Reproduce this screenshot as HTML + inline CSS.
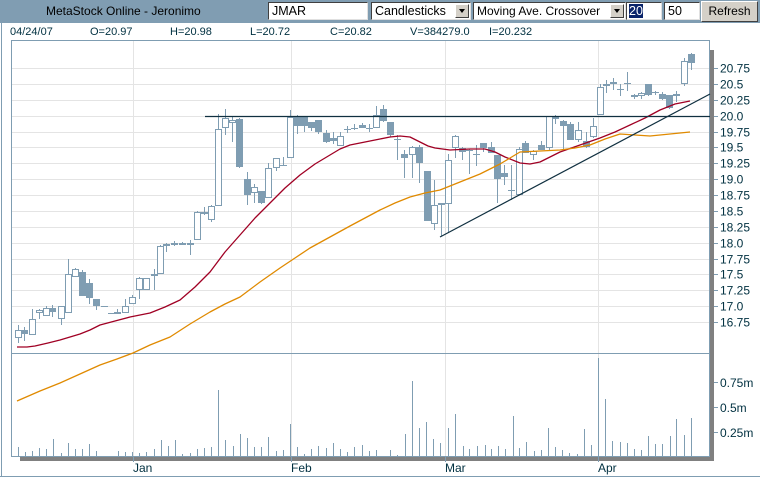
<!DOCTYPE html>
<html><head><meta charset="utf-8">
<style>
body{margin:0;width:760px;height:478px;background:#fff;overflow:hidden;font-family:"Liberation Sans",sans-serif;position:relative}
.hdr{position:absolute;left:0;top:0;width:760px;height:23px;background:#809db2}
.ttl{position:absolute;left:46px;top:4px;font-size:12px;color:#000}
.inp{position:absolute;top:2px;height:18px;background:#fff;border:1px solid #404040;border-right-color:#e0e0e0;border-bottom-color:#e0e0e0;box-sizing:border-box;font-size:12.5px;padding-left:3px;line-height:16px;overflow:hidden;white-space:nowrap}
.arr{position:absolute;right:1px;top:1px;width:14px;height:14px;background:#d4d0c8;border:1px solid;border-color:#fff #404040 #404040 #fff;box-sizing:border-box}
.arr:after{content:"";position:absolute;left:3px;top:4px;border-left:3.5px solid transparent;border-right:3.5px solid transparent;border-top:4px solid #000}
.btn{position:absolute;left:701px;top:1px;width:57px;height:21px;background:#d4d0c8;border:1px solid;border-color:#fff #404040 #404040 #fff;box-sizing:border-box;font-size:12px;text-align:center;line-height:18px}
.info{position:absolute;top:26px;font-size:11px;color:#003040;font-family:"Liberation Sans Narrow","Liberation Sans",sans-serif}
svg{position:absolute;left:0;top:0}
</style></head><body>
<div class="hdr"></div>
<div class="ttl">MetaStock Online - Jeronimo</div>
<div class="inp" style="left:268px;width:100px">JMAR</div>
<div class="inp" style="left:371px;width:100px">Candlesticks<div class="arr"></div></div>
<div class="inp" style="left:473px;width:153px;font-size:12px">Moving Ave. Crossover<div class="arr"></div></div>
<div class="inp" style="left:626px;width:36px;padding-left:2px"><span style="background:#0a246a;color:#fff">20</span></div>
<div class="inp" style="left:664px;width:36px">50</div>
<div class="btn">Refresh</div>
<div class="info" style="left:10px">04/24/07</div>
<div class="info" style="left:90px">O=20.97</div>
<div class="info" style="left:170px">H=20.98</div>
<div class="info" style="left:250px">L=20.72</div>
<div class="info" style="left:330px">C=20.82</div>
<div class="info" style="left:410px">V=384279.0</div>
<div class="info" style="left:489px">I=20.232</div>
<svg id="s" width="760" height="478" xmlns="http://www.w3.org/2000/svg"></svg>
<script>
var s='';
function L(x1,y1,x2,y2,c,w){s+='<line x1="'+x1+'" y1="'+y1+'" x2="'+x2+'" y2="'+y2+'" stroke="'+c+'" stroke-width="'+(w||1)+'"/>';}
L(1.5,23,1.5,477,'#7f9db2');L(0,476.5,760,476.5,'#7f9db2');
for(var i=0;i<17;i++){var y=Math.round(68+i*15.875)+.5;L(12,y,710,y,'#e4e4e4');}
[133,291,445,598].forEach(function(x){L(x+.5,41,x+.5,457,'#e4e4e4');});
L(11.5,40,11.5,457,'#7f9db2');L(11,40.5,710,40.5,'#7f9db2');L(709.5,40,709.5,457,'#7f9db2');L(11,353.5,710,353.5,'#7f9db2');L(11,456.5,710,456.5,'#7f9db2');
s+='<rect x="710" y="50" width="4" height="411" fill="#808080"/><rect x="20" y="457" width="694" height="4" fill="#808080"/>';
var lab=['20.75','20.5','20.25','20.0','19.75','19.5','19.25','19.0','18.75','18.5','18.25','18.0','17.75','17.5','17.25','17.0','16.75'];
lab.forEach(function(t,i){var y=Math.round(68+i*15.875)+.5;L(714,y,718,y,'#7f9db2');s+='<text x="720" y="'+(y+4)+'" font-size="12" fill="#003040" font-family="Liberation Sans">'+t+'</text>';});
[['0.75m',382],['0.5m',407],['0.25m',432]].forEach(function(a){L(714,a[1]+.5,718,a[1]+.5,'#7f9db2');s+='<text x="720" y="'+(a[1]+5)+'" font-size="12" fill="#003040" font-family="Liberation Sans">'+a[0]+'</text>';});
[['Jan',133],['Feb',291],['Mar',445],['Apr',598]].forEach(function(a){L(a[1]+.5,457,a[1]+.5,462,'#7f9db2');s+='<text x="'+(a[1])+'" y="472" font-size="12" fill="#003040" font-family="Liberation Sans">'+a[0]+'</text>';});
var C=[[18,330,338,0,325,343],[24,330,334,1,327,341],[32,319,335,0,309,335],[39,310,313,0,309,319],[46,308,316,0,306,316],[52,308,312,1,305,317],[61,306,319,0,306,325],[68,274,313,0,259,313],[75,269,277,0,268,277],[82,272,296,1,270,296],[89,283,298,1,279,304],[96,299,306,1,299,310],[104,306,307,1,306,307],[111,313,314,1,313,314],[117,312,313,0,309,314],[125,306,313,0,299,313],[132,297,304,0,295,304],[139,278,290,0,277,299],[146,278,290,0,278,290],[154,274,276,1,269,290],[160,246,274,0,245,274],[166,244,246,0,243,252],[174,243,244,0,241,246],[182,243,244,0,242,244],[190,243,244,0,240,255],[197,212,240,0,211,240],[204,212,214,1,207,215],[211,206,220,0,205,222],[218,129,206,0,114,206],[225,118,128,0,109,135],[232,120,123,0,116,142],[239,119,167,1,118,168],[247,179,195,1,172,205],[254,187,193,0,184,203],[261,191,203,1,191,204],[268,168,198,0,163,198],[276,158,168,0,158,171],[283,165,166,1,157,166],[290,117,158,0,110,158],[297,116,126,1,115,134],[304,117,126,1,116,132],[311,122,128,1,122,131],[318,120,132,1,120,134],[326,133,142,1,130,143],[333,138,141,1,132,144],[340,136,146,0,132,146],[347,129,130,1,126,133],[354,128,129,1,124,130],[362,125,128,1,123,128],[369,128,129,1,124,132],[376,115,128,0,106,128],[383,109,121,1,105,122],[390,122,135,1,122,137],[397,139,140,1,135,160],[404,154,158,1,150,178],[412,147,155,0,146,178],[419,147,163,1,145,183],[427,171,221,1,171,221],[434,205,224,0,180,230],[441,203,204,0,203,236],[448,160,204,0,154,233],[455,136,148,0,135,158],[462,148,152,1,147,160],[469,150,151,1,149,174],[476,154,155,1,145,166],[483,143,148,1,143,152],[491,147,153,1,142,153],[497,155,179,1,155,203],[504,173,177,1,165,185],[511,190,191,1,165,200],[519,149,195,0,147,195],[525,143,153,1,141,153],[533,151,155,0,150,160],[541,145,150,1,141,150],[549,116,148,0,116,150],[555,116,119,1,115,124],[563,121,126,1,120,150],[570,124,140,1,122,140],[578,130,140,0,122,142],[586,141,147,1,132,148],[593,126,137,0,118,138],[600,87,115,0,84,115],[606,84,86,1,80,93],[613,82,84,0,78,90],[620,89,90,1,84,96],[627,83,84,1,72,91],[634,95,97,1,94,99],[641,93,96,0,92,99],[648,84,95,1,84,96],[655,92,93,1,91,95],[662,94,99,1,92,100],[669,95,108,1,95,109],[676,94,96,1,91,102],[684,61,84,0,58,86],[691,54,63,1,53,70]];
var col='#7f9db2';
C.forEach(function(c){var x=c[0]+.5;L(x,c[4],x,c[1],col);L(x,c[2],x,c[5],col);
 var h=Math.max(1,c[2]-c[1]);
 if(c[3])s+='<rect x="'+(c[0]-3)+'" y="'+c[1]+'" width="7" height="'+h+'" fill="'+col+'"/>';
 else s+='<rect x="'+(c[0]-2.5)+'" y="'+(c[1]+.5)+'" width="6" height="'+Math.max(1,h-1)+'" fill="#fff" stroke="'+col+'"/>';});
var V=[[18,10],[25,5],[32,6],[39,9],[46,8],[53,18],[61,4],[68,14],[75,8],[82,8],[89,13],[96,6],[104,1],[111,1],[118,6],[125,5],[132,5],[139,4],[146,5],[154,8],[161,17],[168,11],[175,17],[182,3],[190,4],[197,8],[204,9],[211,10],[218,67],[225,17],[233,11],[240,23],[247,19],[254,10],[261,10],[268,20],[276,6],[283,7],[290,33],[297,10],[304,3],[311,8],[318,11],[326,9],[333,14],[340,8],[347,5],[354,10],[362,12],[369,6],[376,7],[383,1],[390,7],[397,2],[405,23],[412,76],[419,29],[426,35],[433,18],[440,14],[448,29],[455,43],[463,11],[469,8],[477,11],[485,12],[491,8],[498,11],[505,8],[513,41],[519,9],[526,15],[534,6],[541,7],[548,29],[555,10],[562,7],[569,4],[577,3],[584,28],[591,12],[598,99],[605,58],[612,16],[620,15],[627,14],[634,8],[641,7],[648,21],[655,13],[662,13],[670,21],[676,38],[684,22],[691,39]];
V.forEach(function(v){L(v[0]+.5,457-v[1],v[0]+.5,457,col);});
function P(pts,c){s+='<polyline fill="none" stroke="'+c+'" stroke-width="1.3" stroke-linejoin="round" points="'+pts.map(function(p){return p.join(',')}).join(' ')+'"/>';}
P([[17,347],[27,347],[35,346],[48,343],[60,340],[70,337],[80,334],[90,330],[100,325],[115,321],[130,317],[150,313],[165,307],[180,300],[195,287],[210,272],[225,252],[240,235],[255,218],[270,203],[285,188],[300,175],[315,164],[330,155],[340,149],[350,145],[360,143],[370,141],[380,139],[390,137],[400,136],[410,137],[420,142],[428,146],[435,148],[450,150],[470,149],[485,149],[495,152],[505,157],[520,163],[530,164],[540,162],[550,157],[560,152],[580,145],[600,138],[615,132],[630,125],[645,118],[660,110],[675,104],[690,101]],'#a00024');
P([[17,401],[40,391],[60,383],[80,374],[100,365],[117,359],[133,353],[150,345],[170,337],[190,324],[210,312],[225,304],[240,297],[260,282],[280,268],[295,258],[310,248],[330,237],[350,226],[365,218],[380,210],[395,203],[410,197],[425,193],[440,190],[450,186],[460,182],[470,178],[480,174],[490,169],[500,164],[510,158],[520,152],[540,151],[560,150],[575,148],[590,145],[605,139],[620,134],[635,135],[650,136],[670,134],[690,132]],'#e08a00');
L(205,116.5,710,116.5,'#103040',1.3);
L(440,237,710,94,'#103040',1.2);
document.getElementById('s').innerHTML=s;
</script>
</body></html>
